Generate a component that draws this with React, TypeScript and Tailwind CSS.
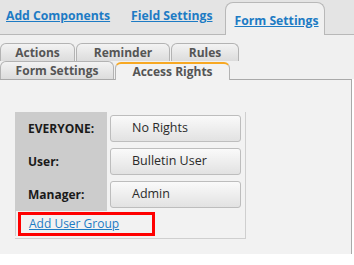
import React from "react";

const font = { fontFamily: '"Open Sans", "Liberation Sans", sans-serif' };

function SubTab({ label, width, active }: { label: string; width: string; active?: boolean }) {
    return (
        <div
            className={
                active
                    ? `${width} h-[18px] -mb-px flex items-center justify-center rounded-t-[6px] border border-b-0 border-[#b3b3b3] border-t-2 border-t-[#f7a823] bg-[#f2f2f2] text-[12px] font-bold text-[#555]`
                    : `${width} h-[18px] flex items-center justify-center rounded-t-[6px] border border-b-0 border-[#b3b3b3] bg-gradient-to-b from-[#f3f3f3] to-[#dcdcdc] text-[12px] font-bold text-[#555]`
            }
        >
            {label}
        </div>
    );
}

function RightsRow({ label, value }: { label: string; value: string }) {
    return (
        <div className="flex h-[33px]">
            <div className="w-[92px] bg-[#cccccc] pl-[13px] flex items-center text-[12px] font-bold text-[#1a1a1a]">{label}</div>
            <div className="flex items-center pl-[3px]">
                <div className="w-[131px] h-[27px] rounded-[3px] border border-[#bdbdbd] bg-gradient-to-b from-[#fafafa] to-[#e2e2e2] pl-[21px] flex items-center text-[12.5px] text-[#2a2a2a]">
                    {value}
                </div>
            </div>
        </div>
    );
}

export default function App() {
    return (
        <div className="w-[354px] h-[265px] bg-white overflow-hidden" style={font}>
            {/* top tabs */}
            <div className="h-[35px] bg-[#e4e4e4] border-b border-[#b8b8b8] flex items-end text-[12.2px] font-bold">
                <a className="ml-[6px] mb-[9px] text-[#1d7bc4] underline">Add Components</a>
                <a className="ml-[21px] mb-[9px] text-[#1d7bc4] underline">Field Settings</a>
                <div className="ml-[13px] -mb-px w-[100px] h-[33px] rounded-t-[8px] border border-b-0 border-[#b8b8b8] bg-[#f0f0f0] pl-[8px] pt-[9px]">
                    <a className="text-[#1d7bc4] underline">Form Settings</a>
                </div>
            </div>

            <div className="bg-[#f0f0f0] pt-[8px]">
                <div className="flex gap-[1px]">
                    <SubTab label="Actions" width="w-[75px]" />
                    <SubTab label="Reminder" width="w-[94px]" />
                    <SubTab label="Rules" width="w-[68px]" />
                </div>
                <div className="flex gap-[1px] items-end">
                    <SubTab label="Form Settings" width="w-[114px]" />
                    <SubTab label="Access Rights" width="w-[115px]" active />
                </div>
            </div>

            {/* content */}
            <div className="w-[352px] h-[175px] bg-[#f2f2f2] border-t border-r border-[#a9a9a9] pt-[32px] pl-[15px]">
                <div className="w-[231px] border border-t-0 border-l-0 border-[#cfcfcf] pb-[2px]">
                    <div>
                        <RightsRow label="EVERYONE:" value="No Rights" />
                        <RightsRow label="User:" value="Bulletin User" />
                        <RightsRow label="Manager:" value="Admin" />
                    </div>
                    <div className="border-l border-[#cfcfcf] pl-[2px] pt-[1px]">
                        <div className="w-[137px] h-[24px] border-[3px] border-[#ff0000] pl-[8px] flex items-center">
                            <a className="text-[12px] text-[#1d7bc4] underline">Add User Group</a>
                        </div>
                    </div>
                </div>
            </div>
        </div>
    );
}
